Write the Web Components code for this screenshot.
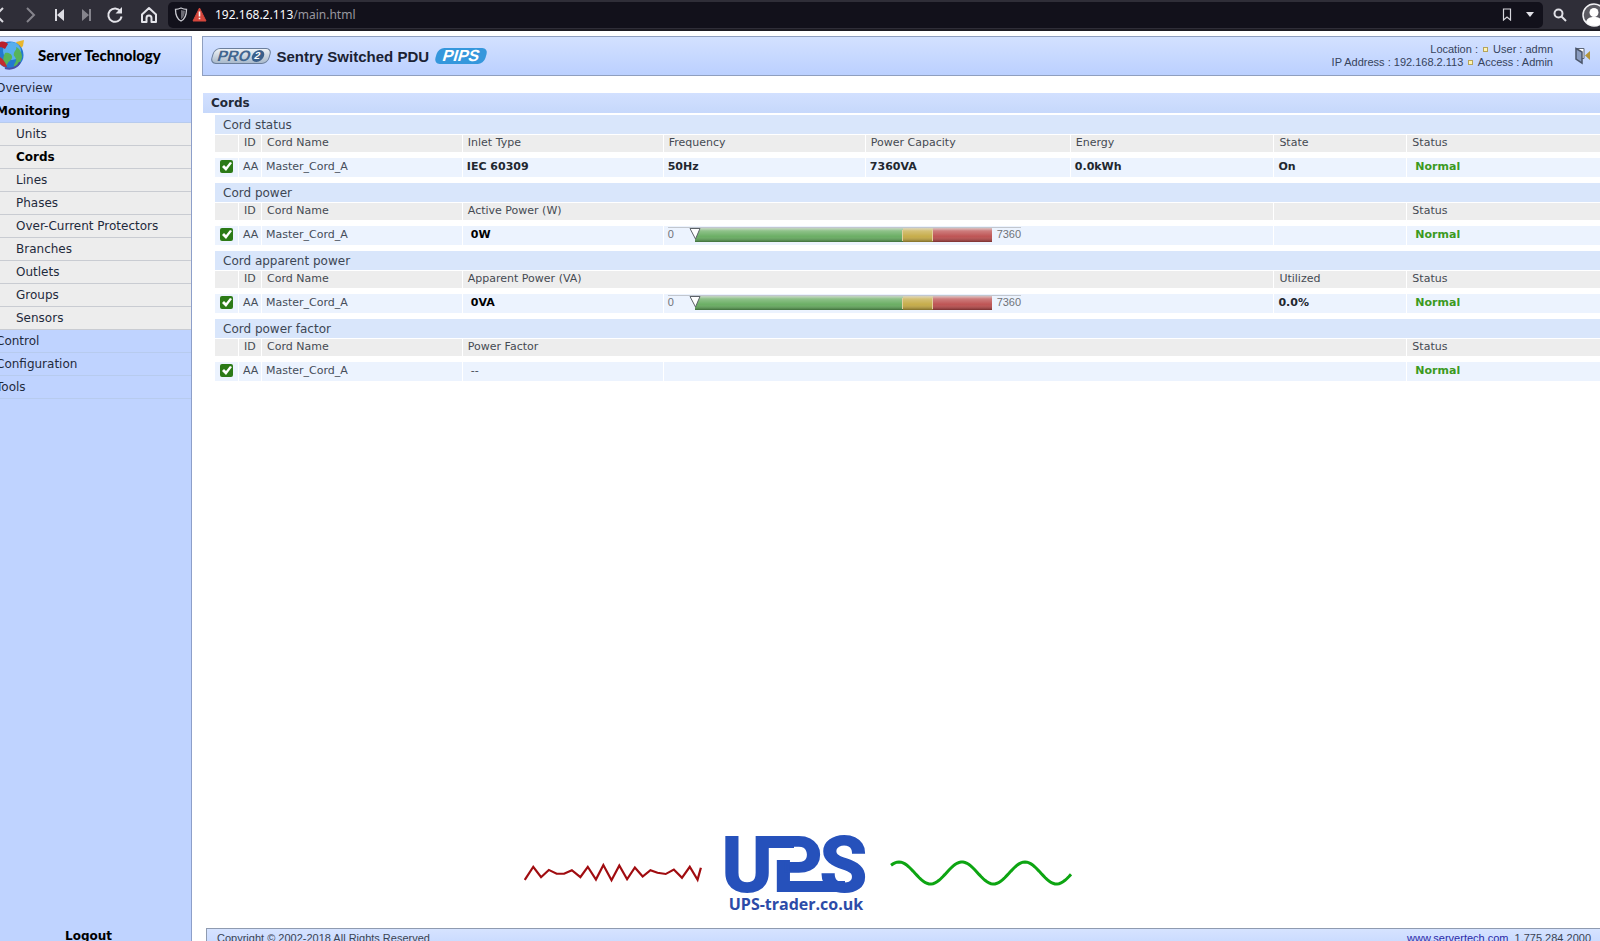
<!DOCTYPE html>
<html lang="en">
<head>
<meta charset="utf-8">
<title>Sentry Switched PDU</title>
<style>
    html, body {
        margin: 0;
        height: 100%;
        overflow: hidden;
        background: #fff;
        font-family: Verdana, "DejaVu Sans", sans-serif;
        font-size: 11px;
        color: #333b47;
    }
</style>
</head>
<body>
<pdu-app></pdu-app>

<script>
class BrowserBar extends HTMLElement {
    constructor() {
        super();
        this.attachShadow({ mode: "open" });
        this.shadowRoot.innerHTML = `
            <style>
                :host {
                    display: flex;
                    align-items: center;
                    height: 31px;
                    box-sizing: border-box;
                    background: #2f2e38;
                    border-bottom: 2px solid #1c1b22;
                    overflow: hidden;
                }
                button {
                    border: none;
                    background: none;
                    padding: 0;
                    width: 28px;
                    height: 28px;
                    flex: none;
                    display: flex;
                    align-items: center;
                    justify-content: center;
                }
                svg { display: block; flex: none; }
                .tools { display: flex; margin-left: -16px; }
                .tools .forward { width: 36px; }
                .tools .first { width: 24px; }
                .tools .reload { width: 30px; }
                .tools .home { width: 38px; }
                .url {
                    flex: 1;
                    display: flex;
                    align-items: center;
                    height: 26px;
                    padding: 0 2px 0 4px;
                    background: #12111b;
                    border-radius: 5px;
                }
                .url svg { margin: 0 2px; }
                .address {
                    flex: 1;
                    margin-left: 6px;
                    font: 12px "Noto Sans", "Open Sans", sans-serif;
                    color: #98979f;
                }
                .address b { font-weight: 400; color: #fbfbfe; }
                .url button { width: 23px; }
                .end { display: flex; margin-right: -11px; }
                .end button { width: 34px; }
            </style>
            <div class="tools">
                <button aria-label="Back"><svg width="14" height="16" viewBox="0 0 14 16" fill="none" stroke="#d8d8de" stroke-width="2"><path d="M12 1 L5 8 L12 15"/></svg></button>
                <button class="forward" aria-label="Forward"><svg width="14" height="16" viewBox="0 0 14 16" fill="none" stroke="#85848c" stroke-width="2"><path d="M4 1 L11 8 L4 15"/></svg></button>
                <button class="first" aria-label="First"><svg width="12" height="12" viewBox="0 0 12 12" fill="#dcdce2"><path d="M1 0h2v12H1zM10 0v12L3 6z"/></svg></button>
                <button aria-label="Last"><svg width="12" height="12" viewBox="0 0 12 12" fill="#85848c"><path d="M9 0h2v12H9zM2 0v12l7-6z"/></svg></button>
                <button class="reload" aria-label="Reload"><svg width="18" height="18" viewBox="0 0 18 18" fill="none" stroke="#e4e4ea" stroke-width="2"><path d="M14.500 5.200A6.700 6.700 0 1 0 15.600 10.500"/><path d="M16 1v6.500H9.500z" fill="#e4e4ea" stroke="none"/></svg></button>
                <button class="home" aria-label="Home"><svg width="18" height="18" viewBox="0 0 18 18" fill="none" stroke="#e4e4ea" stroke-width="2" stroke-linejoin="round"><path d="M2 8.500 9 2l7 6.500V16h-4.500v-4a2.500 2.500 0 0 0-5 0v4H2z"/></svg></button>
            </div>
            <div class="url">
                <svg width="14" height="15" viewBox="0 0 14 15"><path d="M7 1c2 1 4 1.400 5.500 1.400 0 5.500-1 9.300-5.500 11.600C2.500 11.700 1.500 7.900 1.500 2.400 3 2.400 5 2 7 1z" fill="none" stroke="#c9c9d0" stroke-width="1.300"/><path d="M7 3v9.300c3-2 3.800-4.800 3.900-8.500C9.500 3.800 8.200 3.500 7 3z" fill="#6c6b74"/></svg>
                <svg width="15" height="15" viewBox="0 0 15 15"><path d="M7.500 1 14 14H1z" fill="#d5473c" stroke="#d5473c" stroke-linejoin="round"/><path d="M6.700 4.500h1.600v5H6.700zM6.700 10.700h1.600v1.600H6.700z" fill="#fff"/></svg>
                <span class="address"><b>192.168.2.113</b>/main.html</span>
                <button aria-label="Bookmark"><svg width="10" height="13" viewBox="0 0 10 13" fill="none" stroke="#d5d5db" stroke-width="1.200"><path d="M1.500 1h7v11L5 9 1.500 12z"/></svg></button>
                <button aria-label="History"><svg width="8" height="5" viewBox="0 0 8 5" fill="#e0e0e6"><path d="M0 0h8L4 5z"/></svg></button>
            </div>
            <div class="end">
                <button aria-label="Search"><svg width="14" height="14" viewBox="0 0 14 14" fill="none" stroke="#e0e0e6" stroke-width="2"><circle cx="5.500" cy="5.500" r="4"/><path d="M8.500 8.500 13 13"/></svg></button>
                <button aria-label="Account"><svg width="24" height="24" viewBox="0 0 24 24"><circle cx="12" cy="12" r="11" fill="#5b5a62" stroke="#f2f2f5" stroke-width="1.500"/><circle cx="12" cy="9.500" r="4.500" fill="#fff"/><path d="M4 19c1-4 4-5 8-5s7 1 8 5c-4 5-12 5-16 0z" fill="#fff"/></svg></button>
            </div>
        `;
    }
}

class NavItem extends HTMLElement {
    constructor() {
        super();
        this.attachShadow({ mode: "open" });
        this.shadowRoot.innerHTML = `
            <style>
                :host { display: block; }
                a {
                    display: block;
                    height: 22px;
                    line-height: 23px;
                    padding-left: 6px;
                    border-bottom: 1px solid #b7cbee;
                    color: #1f2a3c;
                    text-decoration: none;
                    white-space: nowrap;
                }
                :host([sub]) a {
                    padding-left: 26px;
                    background: #ededed;
                    border-color: #c9ccd2;
                }
                :host([active]) a { font-weight: bold; color: #000; }
            </style>
            <a href="#"><slot></slot></a>
        `;
    }
}

class SideNav extends HTMLElement {
    constructor() {
        super();
        this.attachShadow({ mode: "open" });
        this.shadowRoot.innerHTML = `
            <style>
                :host {
                    display: flex;
                    flex-direction: column;
                    box-sizing: border-box;
                    background: #bfd3ff;
                    border-top: 1px solid #8f9bb5;
                    border-right: 1px solid #8d9fc9;
                    overflow: hidden;
                    font-size: 12px;
                }
                .brand {
                    display: flex;
                    align-items: center;
                    gap: 14px;
                    height: 36px;
                    padding: 0 0 3px 2px;
                    background: linear-gradient(#d3e1ff, #bdd1ff);
                    border-bottom: 1px solid #98a6c4;
                    color: #000;
                    font: 900 15px Lato, sans-serif;
                }
                nav { flex: 1; }
                .logout {
                    margin-bottom: 4px;
                    padding-right: 4px;
                    text-align: center;
                    font-weight: bold;
                    line-height: 16px;
                    color: #000;
                    text-decoration: none;
                }
            </style>
            <div class="brand">
                <svg width="32" height="32" viewBox="0 0 32 32">
                    <path d="M24 3l8-2-1 6-3 3z" fill="#e9b62e"/>
                    <circle cx="18" cy="16" r="13.500" fill="#2479cf"/>
                    <circle cx="20" cy="12" r="9" fill="#58aeee"/>
                    <path d="M24 8c3 1 6 5 6 10-1 6-5 9-8 10-1-3 3-5 2-8s-3-3-2-6 3-3 2-6zM13 14c4-1 8 2 7 5s-4 3-5 7c-4-1-5-6-2-12z" fill="#57b45a"/>
                    <path d="M8 3c4-1 6 0 8 2l-3 5c-3-2-5-2-9-1z" fill="#b8202c"/>
                    <path d="M5 18c4-1 8 4 10 10-5 0-9-4-10-10z" fill="#c22c30"/>
                    <path d="M13 29c7 2 13-1 15-6" fill="none" stroke="#4a4da6" stroke-width="2"/>
                </svg>
                <span>Server Technology</span>
            </div>
            <nav>
                <nav-item>Overview</nav-item>
                <nav-item active>Monitoring</nav-item>
                <nav-item sub>Units</nav-item>
                <nav-item sub active>Cords</nav-item>
                <nav-item sub>Lines</nav-item>
                <nav-item sub>Phases</nav-item>
                <nav-item sub>Over-Current Protectors</nav-item>
                <nav-item sub>Branches</nav-item>
                <nav-item sub>Outlets</nav-item>
                <nav-item sub>Groups</nav-item>
                <nav-item sub>Sensors</nav-item>
                <nav-item>Control</nav-item>
                <nav-item>Configuration</nav-item>
                <nav-item>Tools</nav-item>
            </nav>
            <a class="logout" href="#">Logout</a>
        `;
    }
}

class PduHeader extends HTMLElement {
    constructor() {
        super();
        this.attachShadow({ mode: "open" });
        this.shadowRoot.innerHTML = `
            <style>
                :host {
                    display: flex;
                    align-items: center;
                    gap: 7px;
                    box-sizing: border-box;
                    height: 40px;
                    padding: 0 9px;
                    border: 1px solid #8f9fbf;
                    border-right: none;
                    background: linear-gradient(#d3e1ff, #bbd0ff);
                    font-family: "Liberation Sans", Arial, sans-serif;
                }
                h1 { margin: 0; font-size: 15px; color: #1b2233; }
                .badge {
                    box-sizing: border-box;
                    height: 16px;
                    line-height: 16px;
                    padding: 0 7px;
                    border-radius: 6px;
                    transform: skewX(-16deg);
                    font-size: 16px;
                    font-weight: bold;
                }
                .pro {
                    display: flex;
                    align-items: center;
                    gap: 1px;
                    padding: 0 5px;
                    line-height: 14px;
                    border: 1px solid #6b7e9b;
                    background: linear-gradient(#eef2f6, #a9b9cb);
                    color: #41658f;
                    font-size: 15px;
                }
                .pro i {
                    width: 12px;
                    height: 12px;
                    line-height: 12px;
                    border-radius: 6px;
                    background: #3b5f8a;
                    color: #fff;
                    font-size: 10px;
                    font-style: normal;
                    text-align: center;
                }
                .pips { background: #3597dc; color: #fff; }
                .info {
                    flex: 1;
                    margin-right: 15px;
                    text-align: right;
                    font-size: 11px;
                    line-height: 13px;
                    color: #36435c;
                }
                .dot {
                    display: inline-block;
                    width: 3px;
                    height: 3px;
                    margin: 0 2px 1px;
                    border: 1px solid #b5a45c;
                    background: #fff3b0;
                }
                button { border: none; background: none; padding: 0; }
                svg { display: block; }
            </style>
            <span class="badge pro">PRO<i>2</i></span>
            <h1>Sentry Switched PDU</h1>
            <span class="badge pips">PIPS</span>
            <div class="info">
                <div>Location : <span class="dot"></span> User : admn</div>
                <div>IP Address : 192.168.2.113 <span class="dot"></span> Access : Admin</div>
            </div>
            <button aria-label="Log out">
                <svg width="16" height="18" viewBox="0 0 16 18">
                    <path d="M1 1.500h8v10H5z" fill="#fff" stroke="#5d6779"/>
                    <path d="M1 1.500 7 5v11L1 12z" fill="#8a9cc0" stroke="#4a5468" stroke-width="1.500"/>
                    <path d="M15 4v9L10 8.500z" fill="#b3953a"/>
                </svg>
            </button>
        `;
    }
}

// Scale bar with a needle at the current reading
class PduGauge extends HTMLElement {
    constructor() {
        super();
        this.attachShadow({ mode: "open" });
        this.shadowRoot.innerHTML = `
            <style>
                :host {
                    display: inline-flex;
                    align-items: flex-start;
                    gap: 5px;
                    height: 15px;
                    box-sizing: border-box;
                    border-top: 1px solid #c2c7cf;
                    vertical-align: top;
                    font: 11px/12px "Liberation Sans", Arial, sans-serif;
                    color: #6f7278;
                }
                .min { width: 15px; }
                svg { display: block; margin-top: -1px; }
            </style>
            <span class="min">0</span>
            <svg width="304" height="16" viewBox="0 0 304 16">
                <defs>
                    <linearGradient id="shade" x2="0" y2="1">
                        <stop offset="0" stop-color="#ddd" stop-opacity=".8"/>
                        <stop offset=".2" stop-color="#fff" stop-opacity=".3"/>
                        <stop offset=".6" stop-color="#fff" stop-opacity=".08"/>
                        <stop offset="1" stop-color="#000" stop-opacity=".35"/>
                    </linearGradient>
                </defs>
                <path d="M7 1h297v14H7z" fill="#5fa858"/>
                <path d="M215 1h30v14h-30z" fill="#c2a63c"/>
                <path d="M245 1h59v14h-59z" fill="#b94646"/>
                <path d="M7 1h297v14H7z" fill="url(#shade)"/>
                <path d="M214.500 3v11M244.500 3v11" stroke="#e3cf9d"/>
                <path d="M2 1.500h10L7.500 12z" fill="#fff" stroke="#5c6268"/>
            </svg>
            <span class="max"></span>
        `;
    }

    connectedCallback() {
        this.shadowRoot.querySelector(".max").textContent = this.getAttribute("max");
    }
}

// each cell: [text, colspan, class]
const sections = [
    {
        title: "Cord status",
        head: [["Inlet Type"], ["Frequency"], ["Power Capacity"], ["Energy"], ["State"]],
        row: [["IEC 60309", 1, "bold"], ["50Hz", 1, "bold"], ["7360VA", 1, "bold"], ["0.0kWh", 1, "bold"], ["On", 1, "bold"]]
    },
    {
        title: "Cord power",
        head: [["Active Power (W)", 4], [""]],
        row: [["0W", 1, "value"], [`<pdu-gauge max="7360"></pdu-gauge>`, 3], [""]]
    },
    {
        title: "Cord apparent power",
        head: [["Apparent Power (VA)", 4], ["Utilized"]],
        row: [["0VA", 1, "value"], [`<pdu-gauge max="7360"></pdu-gauge>`, 3], ["0.0%", 1, "bold"]]
    },
    {
        title: "Cord power factor",
        head: [["Power Factor", 5]],
        row: [["--", 1, "none"], ["", 4]]
    }
];

class CordTable extends HTMLElement {
    constructor() {
        super();
        this.attachShadow({ mode: "open" });
    }

    connectedCallback() {
        this.render();
    }

    render() {
        const section = sections[Number(this.getAttribute("index"))];
        const cell = (tag, [text, span = 1, style = ""]) =>
            `<${tag} colspan="${span}" class="${style}">${text}</${tag}>`;

        this.shadowRoot.innerHTML = `
            <style>
                :host { display: block; margin-bottom: 6px; }
                table {
                    width: 100%;
                    table-layout: fixed;
                    border-collapse: separate;
                    border-spacing: 0;
                }
                caption {
                    height: 19px;
                    line-height: 20px;
                    margin-bottom: 1px;
                    padding-left: 8px;
                    background: #d9e6fb;
                    text-align: left;
                    font-size: 12px;
                    color: #3d4654;
                }
                th, td {
                    box-sizing: border-box;
                    padding: 0 0 0 5px;
                    text-align: left;
                    vertical-align: top;
                    white-space: nowrap;
                    border-left: 1px solid #fff;
                }
                th:first-child, td:first-child { border-left: none; }
                th {
                    height: 23px;
                    line-height: 16px;
                    background: #ededed;
                    border-bottom: 6px solid #fff;
                    font-weight: normal;
                    color: #454a52;
                }
                td {
                    height: 19px;
                    padding-left: 4px;
                    line-height: 18px;
                    background: #ecf3fe;
                    color: #454d59;
                }
                .bold { font-weight: bold; color: #22272f; }
                .value { font-weight: bold; color: #000; padding-left: 8px; }
                .none { padding-left: 8px; }
                .ok { font-weight: bold; color: #3c9a1f; padding-left: 8px; }
                pdu-gauge { margin-top: 1px; }
                input {
                    appearance: none;
                    display: block;
                    width: 13px;
                    height: 13px;
                    margin: 2px 0 0 1px;
                    border-radius: 2px;
                    background: #2c7a17;
                }
                input::after {
                    content: "";
                    display: block;
                    width: 13px;
                    height: 13px;
                    background: #fff;
                    clip-path: polygon(2px 7px, 4px 5px, 6px 7px, 10px 2px, 12px 3px, 6px 11px);
                }
            </style>
            <table>
                <caption>${section.title}</caption>
                <colgroup>
                    <col style="width:23px"><col style="width:23px">
                    <col style="width:14.5%"><col style="width:14.5%"><col style="width:14.6%">
                    <col style="width:14.8%"><col style="width:14.7%"><col style="width:9.6%"><col>
                </colgroup>
                <thead>
                    <tr><th></th><th>ID</th><th>Cord Name</th>${section.head.map(c => cell("th", c)).join("")}<th>Status</th></tr>
                </thead>
                <tbody>
                    <tr>
                        <td><input type="checkbox" checked aria-label="Master_Cord_A"></td>
                        <td>AA</td>
                        <td>Master_Cord_A</td>
                        ${section.row.map(c => cell("td", c)).join("")}
                        <td class="ok">Normal</td>
                    </tr>
                </tbody>
            </table>
        `;
    }
}

class CordPanel extends HTMLElement {
    constructor() {
        super();
        this.attachShadow({ mode: "open" });
        this.shadowRoot.innerHTML = `
            <style>
                :host { display: block; }
                h2 {
                    margin: 0 0 2px;
                    padding-left: 8px;
                    line-height: 20px;
                    font-size: 12px;
                    color: #222a38;
                    background: linear-gradient(#d2e0ff, #c6d8fb);
                }
                .tables { padding-left: 12px; }
            </style>
            <h2>Cords</h2>
            <div class="tables">${sections.map((s, i) => `<cord-table index="${i}"></cord-table>`).join("")}</div>
        `;
    }
}

class UpsLogo extends HTMLElement {
    constructor() {
        super();
        this.attachShadow({ mode: "open" });

        // sine wave, just under three periods
        const wave = [];
        for (let x = 1; x < 182; x += 2) {
            wave.push(`${x} ${(14 - 11 * Math.cos((x - 9) / 63 * 2 * Math.PI)).toFixed(1)}`);
        }

        this.shadowRoot.innerHTML = `
            <style>
                :host { display: flex; justify-content: center; align-items: center; gap: 23px; }
                svg { display: block; }
                .mark { display: flex; flex-direction: column; align-items: center; }
                .mark svg { overflow: visible; }
                .name {
                    font: bold 16px/22px "Open Sans", "Noto Sans", sans-serif;
                    color: #2c4ba8;
                }
                text { font: bold 76px Roboto, sans-serif; }
            </style>
            <svg width="178" height="24" viewBox="40 152 480 70" preserveAspectRatio="none" fill="none" stroke="#a00c10" stroke-width="6">
                <path d="M42 207 65 169 86 199 107 178 128 189H148L169 179 192 199 212 169 234 206 254 164 276 208 297 165 318 205 339 171 360 197 381 179 400 186 422 190 444 177 466 201 487 169 508 207 517 172"/>
            </svg>
            <div class="mark">
                <svg width="142" height="62" viewBox="0 0 142 62" fill="#2651bb">
                    <text x="-3 48 95" y="60" stroke="#2651bb" stroke-width="2">UPS</text>
                    <rect x="46" y="17" width="22" height="12" fill="#fff"/>
                    <rect x="33" y="5" width="36" height="12"/>
                    <rect x="52" y="50" width="68" height="11"/>
                </svg>
                <span class="name">UPS-trader.co.uk</span>
            </div>
            <svg width="182" height="28" viewBox="0 0 182 28" fill="none" stroke="#0da512" stroke-width="3">
                <path d="M${wave.join("L")}"/>
            </svg>
        `;
    }
}

class PageFooter extends HTMLElement {
    constructor() {
        super();
        this.attachShadow({ mode: "open" });
        this.shadowRoot.innerHTML = `
            <style>
                :host {
                    display: flex;
                    gap: 6px;
                    padding: 0 9px 0 10px;
                    line-height: 18px;
                    border: 1px solid #8f9bb0;
                    border-right: none;
                    background: linear-gradient(#d6e3ff, #c6d8ff);
                    font-family: "Liberation Sans", Arial, sans-serif;
                    color: #3a4352;
                }
                .copyright { flex: 1; }
                a { color: #2a2aa8; }
            </style>
            <span class="copyright">Copyright © 2002-2018 All Rights Reserved</span>
            <a href="#">www.servertech.com</a>
            <span>1.775.284.2000</span>
        `;
    }
}

class PduApp extends HTMLElement {
    constructor() {
        super();
        this.attachShadow({ mode: "open" });
        this.shadowRoot.innerHTML = `
            <style>
                :host {
                    display: flex;
                    flex-direction: column;
                    position: relative;
                    min-height: calc(100vh + 7px);
                }
                .page {
                    flex: 1;
                    display: flex;
                    gap: 10px;
                    margin: 5px 0 0 -10px;
                }
                side-nav { width: 202px; flex: none; }
                main { flex: 1; display: flex; flex-direction: column; }
                cord-panel { flex: 1; margin: 17px 0 0 1px; }
                page-footer { margin-left: 4px; }
                ups-logo {
                    position: absolute;
                    left: 0;
                    right: 4px;
                    bottom: 33px;
                }
            </style>
            <browser-bar></browser-bar>
            <div class="page">
                <side-nav></side-nav>
                <main>
                    <pdu-header></pdu-header>
                    <cord-panel></cord-panel>
                    <page-footer></page-footer>
                </main>
            </div>
            <ups-logo></ups-logo>
        `;
    }
}

customElements.define("browser-bar", BrowserBar);
customElements.define("nav-item", NavItem);
customElements.define("side-nav", SideNav);
customElements.define("pdu-header", PduHeader);
customElements.define("pdu-gauge", PduGauge);
customElements.define("cord-table", CordTable);
customElements.define("cord-panel", CordPanel);
customElements.define("ups-logo", UpsLogo);
customElements.define("page-footer", PageFooter);
customElements.define("pdu-app", PduApp);
</script>
</body>
</html>
